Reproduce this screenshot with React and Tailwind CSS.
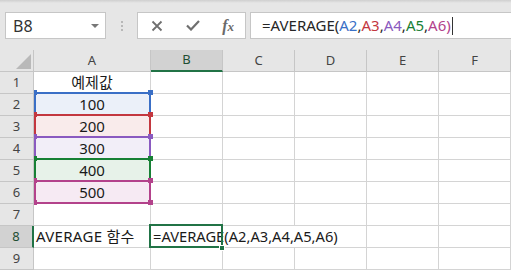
import React from "react";

// colours of the referenced ranges (A2..A6)
const refs = [
  { cell: "A2", fill: "bg-[#ebf0f9]", border: "border-[#3a6fc6]", handle: "bg-[#3a6fc6]", text: "text-[#3a6fc6]" },
  { cell: "A3", fill: "bg-[#f9ebeb]", border: "border-[#c3373f]", handle: "bg-[#c3373f]", text: "text-[#c3373f]" },
  { cell: "A4", fill: "bg-[#f2eef8]", border: "border-[#8a5ac0]", handle: "bg-[#8a5ac0]", text: "text-[#8a5ac0]" },
  { cell: "A5", fill: "bg-[#e7f2e9]", border: "border-[#178035]", handle: "bg-[#178035]", text: "text-[#178035]" },
  { cell: "A6", fill: "bg-[#f6eaf3]", border: "border-[#b3428b]", handle: "bg-[#b3428b]", text: "text-[#b3428b]" },
];

const rowTops = ["top-[42px]", "top-[64px]", "top-[86px]", "top-[108px]", "top-[130px]"];
const handleTops = ["top-[40px]", "top-[62px]", "top-[84px]", "top-[106px]", "top-[128px]"];
const handleBottoms = ["top-[62px]", "top-[84px]", "top-[106px]", "top-[128px]", "top-[150px]"];

const cols = ["A", "B", "C", "D", "E", "F"];

const Formula = () => (
  <>
    <span>=AVERAGE(</span>
    {refs.map((r, i) => (
      <React.Fragment key={r.cell}>
        <span className={r.text}>{r.cell}</span>
        {i < refs.length - 1 && <span>,</span>}
      </React.Fragment>
    ))}
    <span className="text-[#b3428b]">)</span>
  </>
);

const Toolbar = () => (
  <div className="h-[50px] bg-[#e6e6e6] relative">
    <div className="h-[3px] bg-gradient-to-b from-[#cfcfcf] to-[#e6e6e6]" />
    <div className="flex pt-[9px] pl-[5px] h-[36px]">
      {/* name box */}
      <div className="w-[101px] h-[27px] bg-white border border-[#c6c6c6] flex items-center justify-between pl-[7px] pr-[6px]">
        <span className="text-[16px] text-[#333]">B8</span>
        <span className="w-0 h-0 border-l-[4px] border-r-[4px] border-t-[4px] border-l-transparent border-r-transparent border-t-[#777]" />
      </div>
      {/* grip dots */}
      <div className="w-[31px] flex flex-col items-center justify-center gap-[2px]">
        <span className="w-[2px] h-[2px] bg-[#b8b8b8]" />
        <span className="w-[2px] h-[2px] bg-[#b8b8b8]" />
        <span className="w-[2px] h-[2px] bg-[#b8b8b8]" />
      </div>
      {/* cancel / enter / fx */}
      <div className="w-[109px] h-[27px] bg-white border border-[#c6c6c6] flex items-center justify-between pl-[13px] pr-[11px]">
        <svg width="12" height="12" viewBox="0 0 12 12">
          <path d="M1.5 1.5 L10.5 10.5 M10.5 1.5 L1.5 10.5" stroke="#6f6f6f" strokeWidth="1.8" fill="none" />
        </svg>
        <svg width="14" height="11" viewBox="0 0 14 11">
          <path d="M1 5.5 L5 9.5 L13 1" stroke="#6f6f6f" strokeWidth="2.2" fill="none" />
        </svg>
        <span className="font-['Liberation_Serif',serif] italic font-bold text-[16px] text-[#6a6a6a] leading-none">
          f<span className="text-[13px]">x</span>
        </span>
      </div>
      {/* formula bar */}
      <div className="flex-1 ml-[4px] -mr-[4px] h-[27px] bg-white border border-[#c6c6c6] flex items-center pl-[11px] text-[15px] text-[#262626]">
        <span className="whitespace-nowrap">
          <Formula />
        </span>
        <span className="w-[1px] h-[18px] bg-[#333] ml-[1px]" />
      </div>
    </div>
  </div>
);

const rows = [
  { n: 1, a: "예제값" },
  { n: 2, a: "100", fill: refs[0].fill },
  { n: 3, a: "200", fill: refs[1].fill },
  { n: 4, a: "300", fill: refs[2].fill },
  { n: 5, a: "400", fill: refs[3].fill },
  { n: 6, a: "500", fill: refs[4].fill },
  { n: 7 },
  { n: 8 },
  { n: 9 },
];

const Cell = ({ className = "", children }) => (
  <div className={`border-r border-b border-[#d4d4d4] bg-white flex items-center ${className}`}>{children}</div>
);

const Sheet = () => (
  <div className="relative">
    <div className="grid grid-cols-[34px_117px_72px_72px_72px_72px_72px] auto-rows-[22px] text-[15px] text-[#1a1a1a]">
      {/* header row */}
      <div className="bg-[#e6e6e6] border-r border-b border-[#c6c6c6] relative">
        <svg className="absolute left-[16px] top-[4px]" width="15" height="15" viewBox="0 0 15 15">
          <path d="M15 0 L15 15 L0 15 Z" fill="#b9b9b9" />
        </svg>
      </div>
      {cols.map((c) =>
        c === "B" ? (
          <div key={c} className="bg-[#d2d2d2] border-r border-[#c6c6c6] border-b-2 border-b-[#217346] flex items-center justify-center text-[13px] text-[#1f4e33]">
            {c}
          </div>
        ) : (
          <div key={c} className="bg-[#e6e6e6] border-r border-b border-[#c6c6c6] flex items-center justify-center text-[13px] text-[#444]">
            {c}
          </div>
        )
      )}

      {rows.map((r) => (
        <React.Fragment key={r.n}>
          {r.n === 8 ? (
            <div className="bg-[#d2d2d2] border-b border-[#c6c6c6] border-r-2 border-r-[#217346] flex items-center justify-center text-[13px] text-[#1f4e33]">
              {r.n}
            </div>
          ) : (
            <div className="bg-[#e6e6e6] border-r border-b border-[#c6c6c6] flex items-center justify-center text-[13px] text-[#444]">
              {r.n}
            </div>
          )}
          {r.n === 8 ? (
            <>
              <Cell className="pl-[2px] whitespace-nowrap tracking-[0.3px]">AVERAGE 함수</Cell>
              <Cell className="col-span-3 pl-[2px] whitespace-nowrap text-[14.7px]">=AVERAGE(A2,A3,A4,A5,A6)</Cell>
              <Cell />
              <Cell />
            </>
          ) : (
            <>
              <Cell className="justify-center">
                <div className={`h-full w-full flex items-center justify-center ${r.fill || ""}`}>{r.a}</div>
              </Cell>
              <Cell />
              <Cell />
              <Cell />
              <Cell />
              <Cell />
            </>
          )}
        </React.Fragment>
      ))}
    </div>

    {/* referenced range borders, later ones on top */}
    {refs.map((r, i) => (
      <React.Fragment key={r.cell}>
        <div className={`absolute left-[34px] w-[117px] h-[24px] border-2 ${rowTops[i]} ${r.border}`} />
        <div className={`absolute left-[34px] w-[3px] h-[5px] ${handleTops[i]} ${r.handle}`} />
        <div className={`absolute left-[148px] w-[5px] h-[5px] ${handleTops[i]} ${r.handle}`} />
        <div className={`absolute left-[34px] w-[3px] h-[5px] ${handleBottoms[i]} ${r.handle}`} />
        <div className={`absolute left-[148px] w-[5px] h-[5px] ${handleBottoms[i]} ${r.handle}`} />
      </React.Fragment>
    ))}

    {/* active cell B8 */}
    <div className="absolute left-[149px] top-[174px] w-[74px] h-[24px] border-2 border-[#217346]" />
    <div className="absolute left-[219px] top-[195px] w-[6px] h-[6px] bg-[#217346] border border-white" />
  </div>
);

export default function App() {
  return (
    <div className="w-[511px] h-[270px] overflow-hidden bg-white font-['Noto_Sans','Noto_Sans_CJK_KR',sans-serif]">
      <Toolbar />
      <Sheet />
    </div>
  );
}
